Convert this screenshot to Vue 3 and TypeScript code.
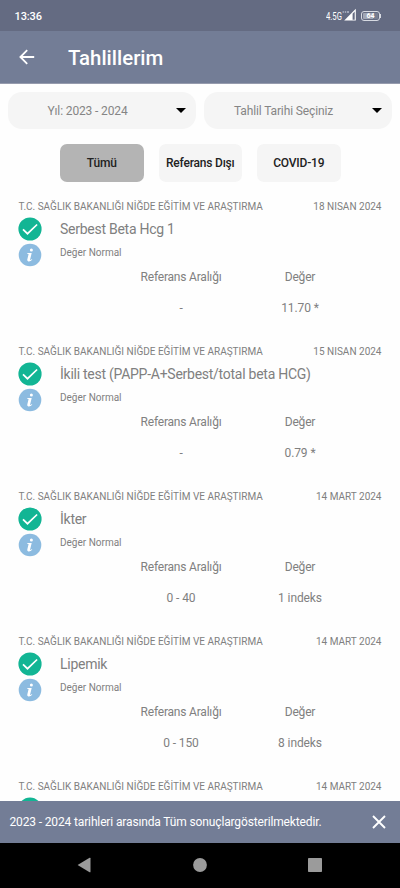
<script setup lang="ts">
interface TestResult {
  date: string
  name?: string
  range?: string
  value?: string
}

const institution = 'T.C. SAĞLIK BAKANLIĞI NİĞDE EĞİTİM VE ARAŞTIRMA'

const results: TestResult[] = [
  { date: '18 NISAN 2024', name: 'Serbest Beta Hcg 1', range: '-', value: '11.70 *' },
  { date: '15 NISAN 2024', name: 'İkili test (PAPP-A+Serbest/total beta HCG)', range: '-', value: '0.79 *' },
  { date: '14 MART 2024', name: 'İkter', range: '0 - 40', value: '1 indeks' },
  { date: '14 MART 2024', name: 'Lipemik', range: '0 - 150', value: '8 indeks' },
  { date: '14 MART 2024' },
]

const tabs: string[] = ['Tümü', 'Referans Dışı', 'COVID-19']
</script>

<template>
  <div class="screen">
    <div class="status">
      <span class="clock">13:36</span>
      <div class="indicators">
        <span class="network">4.5G</span>
        <svg class="signal" width="15" height="14" viewBox="0 0 15 14">
          <path d="M2.2 12.6 L13.8 .8 V12.6 Z" fill="#fff" />
          <path d="M10.6 5.8 L12.7 3.5 V11.7 H10.6 Z" fill="#646b82" />
          <path d="M.6 3.9h1.3M2.8 3.9h1.4M5 3.9h2" stroke="#b4b9c8" stroke-width="1.5" />
        </svg>
        <span class="battery"><span class="level">64</span></span>
      </div>
    </div>

    <header class="appbar">
      <svg class="back" width="16" height="16" viewBox="0 0 16 16" fill="none" stroke="#fff" stroke-width="1.8">
        <path d="M15.2 8H1.6M8.2 1.1 1.4 8l6.8 6.9" />
      </svg>
      <h1>Tahlillerim</h1>
    </header>

    <div class="filters">
      <div class="select">
        <span class="year">Yıl: 2023 - 2024</span>
        <svg width="10" height="5" viewBox="0 0 10 5"><path d="M0 0h10L5 5z" /></svg>
      </div>
      <div class="select">
        <span class="when">Tahlil Tarihi Seçiniz</span>
        <svg width="10" height="5" viewBox="0 0 10 5"><path d="M0 0h10L5 5z" /></svg>
      </div>
    </div>

    <nav class="tabs">
      <button v-for="(tab, i) in tabs" :key="tab" :class="{ active: i === 0 }">{{ tab }}</button>
    </nav>

    <main class="list">
      <article v-for="(item, i) in results" :key="i" class="result">
        <div class="source">
          <span class="org">{{ institution }}</span>
          <span class="date">{{ item.date }}</span>
        </div>
        <div class="body">
          <div class="icons">
            <svg width="24" height="24" viewBox="0 0 24 24">
              <circle cx="12" cy="12" r="11.6" fill="#12b594" />
              <path d="M5 12.3l4.5 4.4L19.1 7.5" fill="none" stroke="#fff" stroke-width="1.7" />
            </svg>
            <svg width="24" height="24" viewBox="0 0 24 24">
              <circle cx="12" cy="12" r="11.3" fill="#8cbbe0" />
              <circle cx="13.4" cy="6.9" r="1.5" fill="#fff" />
              <path d="M9.4 10.1h4.3l-1.7 6.8q.9.1 2-.9l.2.7q-1.8 2-3.8 1.7-1.5-.3-1.1-1.9l1.3-5.4-1.5-.3z" fill="#fff" />
            </svg>
          </div>
          <div v-if="item.name" class="summary">
            <h2>{{ item.name }}</h2>
            <p>Değer Normal</p>
          </div>
        </div>
        <div v-if="item.value" class="values">
          <span class="label">Referans Aralığı</span>
          <span class="label">Değer</span>
          <span>{{ item.range }}</span>
          <span>{{ item.value }}</span>
        </div>
      </article>
    </main>

    <div class="notice">
      <span>2023 - 2024 tarihleri arasında Tüm sonuçlargösterilmektedir.</span>
      <svg width="14" height="14" viewBox="0 0 14 14" stroke="#fff" stroke-width="1.9">
        <path d="M1 1l12 12M13 1 1 13" />
      </svg>
    </div>

    <footer class="system">
      <svg width="14" height="16" viewBox="0 0 14 16"><path d="M.6 8 12.6.8q.9-.4.9.5v13.4q0 .9-.9.5z" /></svg>
      <svg class="home" width="14" height="14" viewBox="0 0 14 14"><circle cx="7" cy="7" r="6.9" /></svg>
      <svg width="14" height="14" viewBox="0 0 14 14"><rect width="14" height="14" rx=".8" /></svg>
    </footer>
  </div>
</template>

<style>
body {
  margin: 0;
  overflow: hidden;
}
</style>

<style scoped>
.screen {
  display: flex;
  flex-direction: column;
  width: 400px;
  height: 888px;
  overflow: hidden;
  background: #fefefe;
  color: #808080;
  font-family: Roboto, sans-serif;
  white-space: nowrap;
}
.status {
  display: flex;
  flex: none;
  align-items: center;
  justify-content: space-between;
  box-sizing: border-box;
  height: 31px;
  padding: 1px 20px 0 14.5px;
  background: #646b82;
  color: #fff;
}
.clock {
  font-size: 11px;
  font-weight: 500;
  letter-spacing: -0.1px;
}
.indicators {
  display: flex;
  align-items: center;
}
.network {
  width: 16px;
  font-size: 11px;
  transform: scaleX(0.7);
  transform-origin: left;
}
.signal {
  margin: -2px 4px 0 0;
}
.battery {
  position: relative;
  display: flex;
  box-sizing: border-box;
  width: 19px;
  height: 10px;
  padding: 1px;
  border: 1px solid #d7dae2;
  border-radius: 3px;
}
.battery::after {
  position: absolute;
  top: 2px;
  right: -2px;
  width: 1px;
  height: 4px;
  background: #d7dae2;
  content: '';
}
.level {
  width: 100%;
  border-radius: 1px;
  background: linear-gradient(90deg, #a2a7b5 64%, #777e91 64%);
  font-size: 7px;
  font-weight: 700;
  line-height: 7px;
  text-align: center;
}
.appbar {
  display: flex;
  flex: none;
  align-items: center;
  box-sizing: border-box;
  height: 53px;
  padding: 0 0 0 19px;
  border-bottom: 1px solid #969bad;
  background: #737d96;
  color: #fff;
}
h1 {
  margin: 2px 0 0 33px;
  font-size: 20.4px;
  font-weight: 500;
  line-height: 24px;
}
.filters {
  display: flex;
  flex: none;
  gap: 8px;
  padding: 8px 8px 0;
}
.select {
  display: flex;
  flex: 1;
  align-items: center;
  box-sizing: border-box;
  height: 37px;
  padding-right: 10px;
  border-radius: 14px;
  background: #f5f5f5;
  color: #858585;
  font-size: 12px;
  letter-spacing: -0.13px;
}
.select span {
  flex: 1;
  padding-right: 9px;
  text-align: center;
}
.tabs {
  display: flex;
  flex: none;
  gap: 15px;
  padding: 15px 0 0 60px;
}
.tabs button {
  width: 83.5px;
  height: 38px;
  padding: 0;
  border: 0;
  border-radius: 7px;
  background: #f5f5f5;
  color: #222;
  font: 500 12px Roboto, sans-serif;
  letter-spacing: -0.2px;
}
.tabs .active {
  background: #b4b4b4;
}
.list {
  flex: 1;
  min-height: 0;
  padding-top: 17px;
  overflow: hidden;
}
.result {
  box-sizing: border-box;
  height: 144.9px;
  padding: 0 18.5px;
}
.source {
  display: flex;
  justify-content: space-between;
  height: 18px;
  font-size: 10px;
  line-height: 15px;
}
.body {
  display: flex;
}
.icons {
  display: flex;
  flex-direction: column;
  gap: 2px;
  width: 42.5px;
  margin-left: -1px;
}
.icons svg {
  display: block;
}
h2 {
  margin: 0;
  font-size: 14px;
  font-weight: 400;
  letter-spacing: -0.26px;
  line-height: 24px;
}
p {
  margin: 5px 0 0;
  font-size: 10px;
  line-height: 14px;
}
.values {
  display: grid;
  grid-template-columns: 119px 119px;
  row-gap: 15.4px;
  margin: 2px 0 0 103px;
  font-size: 12px;
  letter-spacing: -0.1px;
  line-height: 16px;
  text-align: center;
}
.label {
  letter-spacing: -0.2px;
}
.notice {
  display: flex;
  flex: none;
  align-items: center;
  justify-content: space-between;
  box-sizing: border-box;
  height: 42px;
  padding: 0 14px 0 9.5px;
  background: #737d96;
  color: #fff;
  font-size: 12px;
  letter-spacing: -0.14px;
}
.system {
  display: flex;
  flex: none;
  align-items: center;
  justify-content: space-between;
  box-sizing: border-box;
  height: 45px;
  padding: 0 78px 1px 76.5px;
  background: #000;
}
.system svg {
  fill: #9b9b9b;
}
.home {
  margin-left: 1.5px;
}
</style>
